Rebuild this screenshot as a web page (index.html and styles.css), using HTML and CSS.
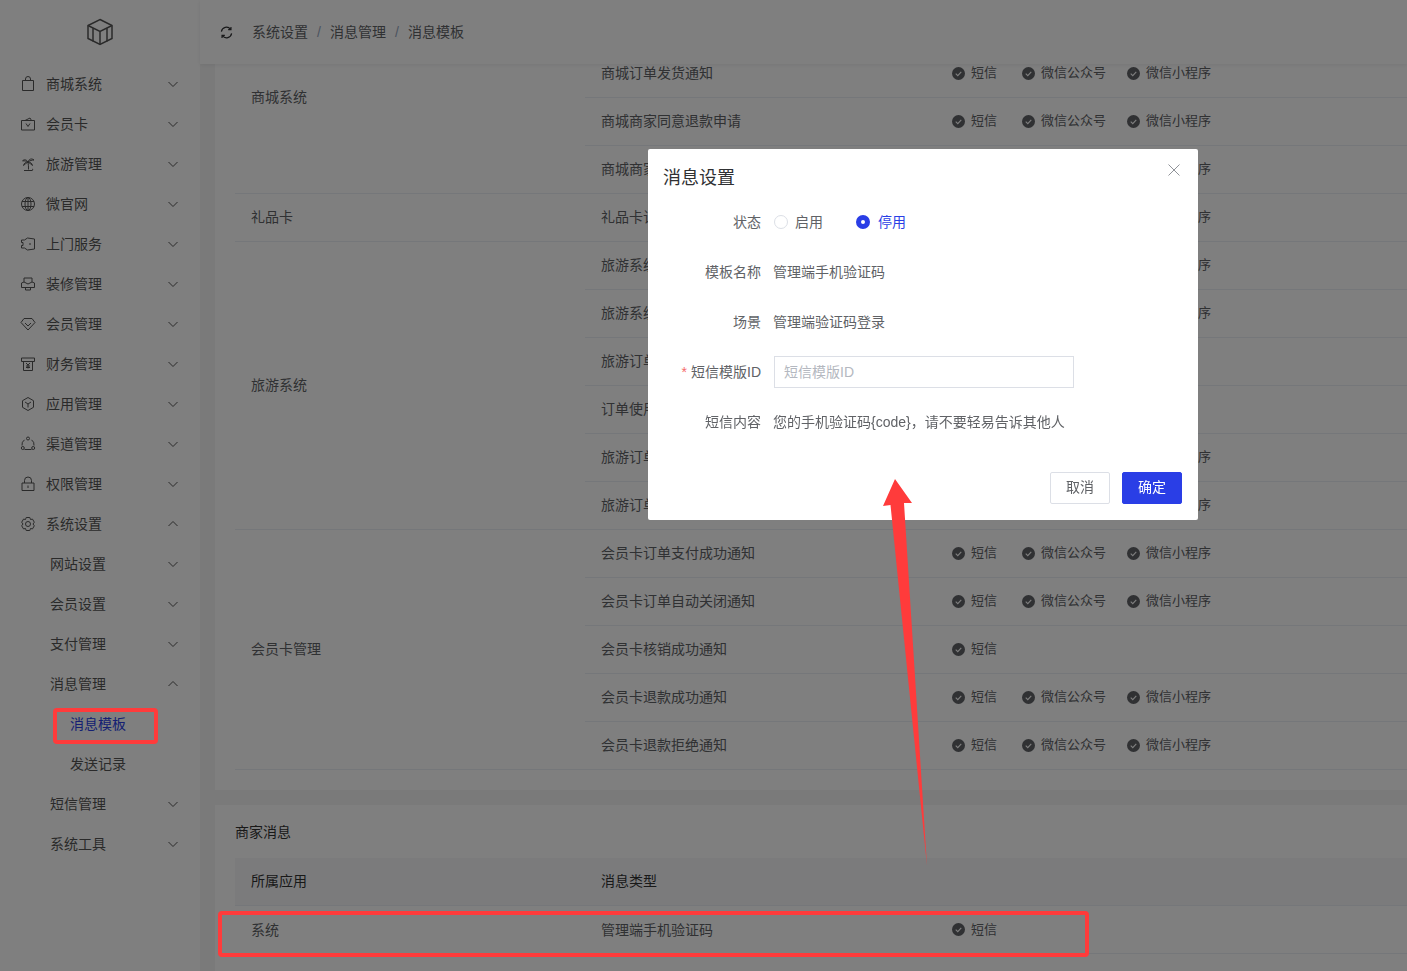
FILE: index.html
```html
<!DOCTYPE html>
<html lang="zh-CN">
<head>
    <meta charset="UTF-8">
    <meta name="viewport" content="width=device-width, initial-scale=1.0">
    <title>消息模板</title>
    <link rel="stylesheet" href="styles.css">
</head>

<body>
    <svg class="sprite" width="0" height="0">
        <symbol id="down" viewBox="0 0 12 12"><path d="M1.5 4l4.500 4.500L10.500 4" fill="none" stroke="currentColor"/></symbol>
        <symbol id="up" viewBox="0 0 12 12"><path d="M1.500 8L6 3.500 10.500 8" fill="none" stroke="currentColor"/></symbol>
        <symbol id="ok" viewBox="0 0 14 14"><circle cx="7" cy="7" r="7" fill="#606266"/><path d="M4 7.200l2.200 2.100L10 5.200" fill="none" stroke="#fff" stroke-width="1.200"/></symbol>
    </svg>

    <!-- 侧边栏 -->
    <aside class="sidebar">
        <div class="logo">
            <svg width="28" height="28" viewBox="0 0 28 28" fill="none" stroke="currentColor" stroke-width="1.500">
                <path d="M14 1.500L26 7.500V20.500L14 26.500 2 20.500V7.500z"/>
                <path d="M2 7.500L14 13.500 26 7.500M14 13.500V26.500M7 10v13.500M21 10v13.500"/>
            </svg>
        </div>
        <nav>
            <div class="menu-item">
                <svg class="menu-icon" viewBox="0 0 16 16"><path d="M2.500 4.500h11v10h-11zM5.500 4.500V3a2.500 2.500 0 0 1 5 0v1.500"/></svg>
                <span>商城系统</span><svg class="arrow"><use href="#down"/></svg>
            </div>
            <div class="menu-item">
                <svg class="menu-icon" viewBox="0 0 16 16"><path d="M1.500 4.500h13v9.500h-13zM5 4.500L10 2l1.500 2.500M6 7.500L8 10.500 10 7.500"/></svg>
                <span>会员卡</span><svg class="arrow"><use href="#down"/></svg>
            </div>
            <div class="menu-item">
                <svg class="menu-icon" viewBox="0 0 16 16"><path d="M8 6c.5 2.500.5 5 .5 7.500M8 6C6.500 3.500 4 3 2.500 5 4.500 4.500 6 5 8 6zM8 6c1-3 3.500-4 6-2-2 0-4 .5-6 2zM8 6C6 6 4 7 3.500 9.500 5 8 6.500 7 8 6zM8 6c2 0 4 1 4.500 3.500C11 8 9.500 7 8 6zM4 14.500h8c1 0 1-1.500 0-1.500"/></svg>
                <span>旅游管理</span><svg class="arrow"><use href="#down"/></svg>
            </div>
            <div class="menu-item">
                <svg class="menu-icon" viewBox="0 0 16 16"><circle cx="8" cy="8" r="6.500"/><ellipse cx="8" cy="8" rx="3" ry="6.500"/><path d="M2 5.500h12M2 10.500h12M8 1.500v13"/></svg>
                <span>微官网</span><svg class="arrow"><use href="#down"/></svg>
            </div>
            <div class="menu-item">
                <svg class="menu-icon" viewBox="0 0 16 16"><path d="M1.500 4h3l3-2 7 1v10l-7 1-3-2h-3V9.500H3V6.500H1.500zM10 7v2"/></svg>
                <span>上门服务</span><svg class="arrow"><use href="#down"/></svg>
            </div>
            <div class="menu-item">
                <svg class="menu-icon" viewBox="0 0 16 16"><path d="M4 2h8v4l2.500 1v4.500h-13V7L4 6zM4 6l4 2 4-2M5.500 11.500v2.500h5v-2.500"/></svg>
                <span>装修管理</span><svg class="arrow"><use href="#down"/></svg>
            </div>
            <div class="menu-item">
                <svg class="menu-icon" viewBox="0 0 16 16"><path d="M4 2.500h8L15 6.500 8 14 1 6.500zM5 7l3 3 3-3"/></svg>
                <span>会员管理</span><svg class="arrow"><use href="#down"/></svg>
            </div>
            <div class="menu-item">
                <svg class="menu-icon" viewBox="0 0 16 16"><path d="M1.500 2h13v3.500h-13zM3.500 5.500V14.500h9V5.500M6 7l2 2 2-2M8 9v3.500M6 10h4M6 11.500h4"/></svg>
                <span>财务管理</span><svg class="arrow"><use href="#down"/></svg>
            </div>
            <div class="menu-item">
                <svg class="menu-icon" viewBox="0 0 16 16"><path d="M8 1.500l5.500 3.200v6.600L8 14.500l-5.500-3.200V4.700zM5 6l3 2 3-2M8 8v3.500"/></svg>
                <span>应用管理</span><svg class="arrow"><use href="#down"/></svg>
            </div>
            <div class="menu-item">
                <svg class="menu-icon" viewBox="0 0 16 16"><path d="M4.500 3.800A6 6 0 0 0 2 9.500M11.500 3.800A6 6 0 0 1 14 9.500M4.500 13.500h7"/><circle cx="8" cy="2.500" r="1.500"/><circle cx="2.800" cy="12" r="1.500"/><circle cx="13.200" cy="12" r="1.500"/></svg>
                <span>渠道管理</span><svg class="arrow"><use href="#down"/></svg>
            </div>
            <div class="menu-item">
                <svg class="menu-icon" viewBox="0 0 16 16"><path d="M2 7h12v7.500H2zM4.500 7V4.500a3.500 3.500 0 0 1 7 0V7M8 9.500v2.500"/></svg>
                <span>权限管理</span><svg class="arrow"><use href="#down"/></svg>
            </div>
            <div class="menu-item">
                <svg class="menu-icon" viewBox="0 0 16 16"><path d="M6.200 1.500h3.600l.7 2 2-.4 1.800 3.100L13 8l1.300 1.800-1.800 3.100-2-.4-.7 2H6.200l-.7-2-2 .4-1.800-3.100L3 8 1.700 6.200l1.800-3.100 2 .4z"/><circle cx="8" cy="8" r="2.500"/></svg>
                <span>系统设置</span><svg class="arrow"><use href="#up"/></svg>
            </div>
            <div class="menu-item sub"><span>网站设置</span><svg class="arrow"><use href="#down"/></svg></div>
            <div class="menu-item sub"><span>会员设置</span><svg class="arrow"><use href="#down"/></svg></div>
            <div class="menu-item sub"><span>支付管理</span><svg class="arrow"><use href="#down"/></svg></div>
            <div class="menu-item sub"><span>消息管理</span><svg class="arrow"><use href="#up"/></svg></div>
            <div class="menu-item leaf active"><span>消息模板</span></div>
            <div class="menu-item leaf"><span>发送记录</span></div>
            <div class="menu-item sub"><span>短信管理</span><svg class="arrow"><use href="#down"/></svg></div>
            <div class="menu-item sub"><span>系统工具</span><svg class="arrow"><use href="#down"/></svg></div>
        </nav>
    </aside>

    <div class="main">
        <header class="topbar">
            <svg class="refresh" viewBox="0 0 14 14" fill="none" stroke="currentColor" stroke-width="1.300">
                <path d="M1.500 6a5.500 5.500 0 0 1 9.800-2.500M12.500 8a5.500 5.500 0 0 1-9.800 2.500M11.800 1v3h-3M2.200 13v-3h3"/>
            </svg>
            <span>系统设置</span><i>/</i><span>消息管理</span><i>/</i><span>消息模板</span>
        </header>

        <div class="content">
            <section class="card first">
                <table class="msg-table">
                    <tr>
                        <td class="col-app" rowspan="4">商城系统</td>
                        <td class="col-name">商城订单支付成功通知</td>
                        <td><div class="types"><span class="type sms"><svg><use href="#ok"/></svg>短信</span><span class="type wx"><svg><use href="#ok"/></svg>微信公众号</span><span class="type"><svg><use href="#ok"/></svg>微信小程序</span></div></td>
                    </tr>
                    <tr>
                        <td class="col-name">商城订单发货通知</td>
                        <td><div class="types"><span class="type sms"><svg><use href="#ok"/></svg>短信</span><span class="type wx"><svg><use href="#ok"/></svg>微信公众号</span><span class="type"><svg><use href="#ok"/></svg>微信小程序</span></div></td>
                    </tr>
                    <tr>
                        <td class="col-name">商城商家同意退款申请</td>
                        <td><div class="types"><span class="type sms"><svg><use href="#ok"/></svg>短信</span><span class="type wx"><svg><use href="#ok"/></svg>微信公众号</span><span class="type"><svg><use href="#ok"/></svg>微信小程序</span></div></td>
                    </tr>
                    <tr>
                        <td class="col-name">商城商家拒绝退款申请</td>
                        <td><div class="types"><span class="type sms"><svg><use href="#ok"/></svg>短信</span><span class="type wx"><svg><use href="#ok"/></svg>微信公众号</span><span class="type"><svg><use href="#ok"/></svg>微信小程序</span></div></td>
                    </tr>
                    <tr>
                        <td class="col-app">礼品卡</td>
                        <td class="col-name">礼品卡订单支付成功通知</td>
                        <td><div class="types"><span class="type sms"><svg><use href="#ok"/></svg>短信</span><span class="type wx"><svg><use href="#ok"/></svg>微信公众号</span><span class="type"><svg><use href="#ok"/></svg>微信小程序</span></div></td>
                    </tr>
                    <tr>
                        <td class="col-app" rowspan="6">旅游系统</td>
                        <td class="col-name">旅游系统订单支付成功通知</td>
                        <td><div class="types"><span class="type sms"><svg><use href="#ok"/></svg>短信</span><span class="type wx"><svg><use href="#ok"/></svg>微信公众号</span><span class="type"><svg><use href="#ok"/></svg>微信小程序</span></div></td>
                    </tr>
                    <tr>
                        <td class="col-name">旅游系统订单确认通知</td>
                        <td><div class="types"><span class="type sms"><svg><use href="#ok"/></svg>短信</span><span class="type wx"><svg><use href="#ok"/></svg>微信公众号</span><span class="type"><svg><use href="#ok"/></svg>微信小程序</span></div></td>
                    </tr>
                    <tr>
                        <td class="col-name">旅游订单核销通知</td>
                        <td><div class="types"><span class="type sms"><svg><use href="#ok"/></svg>短信</span></div></td>
                    </tr>
                    <tr>
                        <td class="col-name">订单使用提醒</td>
                        <td><div class="types"><span class="type sms"><svg><use href="#ok"/></svg>短信</span></div></td>
                    </tr>
                    <tr>
                        <td class="col-name">旅游订单退款成功通知</td>
                        <td><div class="types"><span class="type sms"><svg><use href="#ok"/></svg>短信</span><span class="type wx"><svg><use href="#ok"/></svg>微信公众号</span><span class="type"><svg><use href="#ok"/></svg>微信小程序</span></div></td>
                    </tr>
                    <tr>
                        <td class="col-name">旅游订单退款拒绝通知</td>
                        <td><div class="types"><span class="type sms"><svg><use href="#ok"/></svg>短信</span><span class="type wx"><svg><use href="#ok"/></svg>微信公众号</span><span class="type"><svg><use href="#ok"/></svg>微信小程序</span></div></td>
                    </tr>
                    <tr>
                        <td class="col-app" rowspan="5">会员卡管理</td>
                        <td class="col-name">会员卡订单支付成功通知</td>
                        <td><div class="types"><span class="type sms"><svg><use href="#ok"/></svg>短信</span><span class="type wx"><svg><use href="#ok"/></svg>微信公众号</span><span class="type"><svg><use href="#ok"/></svg>微信小程序</span></div></td>
                    </tr>
                    <tr>
                        <td class="col-name">会员卡订单自动关闭通知</td>
                        <td><div class="types"><span class="type sms"><svg><use href="#ok"/></svg>短信</span><span class="type wx"><svg><use href="#ok"/></svg>微信公众号</span><span class="type"><svg><use href="#ok"/></svg>微信小程序</span></div></td>
                    </tr>
                    <tr>
                        <td class="col-name">会员卡核销成功通知</td>
                        <td><div class="types"><span class="type sms"><svg><use href="#ok"/></svg>短信</span></div></td>
                    </tr>
                    <tr>
                        <td class="col-name">会员卡退款成功通知</td>
                        <td><div class="types"><span class="type sms"><svg><use href="#ok"/></svg>短信</span><span class="type wx"><svg><use href="#ok"/></svg>微信公众号</span><span class="type"><svg><use href="#ok"/></svg>微信小程序</span></div></td>
                    </tr>
                    <tr>
                        <td class="col-name">会员卡退款拒绝通知</td>
                        <td><div class="types"><span class="type sms"><svg><use href="#ok"/></svg>短信</span><span class="type wx"><svg><use href="#ok"/></svg>微信公众号</span><span class="type"><svg><use href="#ok"/></svg>微信小程序</span></div></td>
                    </tr>
                </table>
            </section>

            <section class="card">
                <h3 class="card-title">商家消息</h3>
                <table class="msg-table">
                    <tr class="head">
                        <th class="col-app">所属应用</th>
                        <th class="col-name">消息类型</th>
                        <th></th>
                    </tr>
                    <tr>
                        <td class="col-app">系统</td>
                        <td class="col-name">管理端手机验证码</td>
                        <td><div class="types"><span class="type sms"><svg><use href="#ok"/></svg>短信</span></div></td>
                    </tr>
                </table>
            </section>
        </div>
    </div>

    <!-- 弹窗 -->
    <div class="mask"></div>
    <div class="dialog">
        <h2 class="dialog-title">消息设置</h2>
        <svg class="dialog-close" viewBox="0 0 12 12"><path d="M.5.5l11 11M11.500.5l-11 11" stroke="currentColor" fill="none"/></svg>
        <div class="form">
            <div class="form-row">
                <label>状态</label>
                <div class="radios">
                    <span class="radio"><i class="dot"></i>启用</span>
                    <span class="radio checked"><i class="dot"></i>停用</span>
                </div>
            </div>
            <div class="form-row"><label>模板名称</label><div>管理端手机验证码</div></div>
            <div class="form-row"><label>场景</label><div>管理端验证码登录</div></div>
            <div class="form-row">
                <label><em>*</em>短信模版ID</label>
                <input type="text" placeholder="短信模版ID">
            </div>
            <div class="form-row"><label>短信内容</label><div>您的手机验证码{code}，请不要轻易告诉其他人</div></div>
        </div>
        <div class="dialog-footer">
            <button class="btn">取消</button>
            <button class="btn primary">确定</button>
        </div>
    </div>

    <!-- 红色标注 -->
    <svg class="marks" width="1407" height="971" viewBox="0 0 1407 971">
        <rect x="55" y="710" width="101" height="32" rx="2"/>
        <rect x="220" y="913" width="867" height="42" rx="2"/>
        <polygon points="895,479 912,503 904,503 927,866 890.500,505 883,506"/>
    </svg>
</body>
</html>
```

FILE: styles.css
```css
* {
    box-sizing: border-box;
}

html, body {
    height: 100%;
}

body {
    display: flex;
    margin: 0;
    overflow: hidden;
    font-family: "Liberation Sans", "Noto Sans CJK SC", sans-serif;
    font-size: 14px;
    line-height: 20px;
    color: #606266;
    background-color: #f5f5f5;
}

.sprite {
    position: absolute;
}

/* 侧边栏 */
.sidebar {
    flex: 0 0 200px;
    background-color: #fff;
    color: #555;
}

.logo {
    display: flex;
    justify-content: center;
    align-items: center;
    height: 64px;
}

.menu-item {
    display: flex;
    align-items: center;
    height: 40px;
    padding-left: 20px;
}

.menu-icon {
    flex: none;
    width: 16px;
    height: 16px;
    margin-right: 10px;
    fill: none;
    stroke: currentColor;
}

.arrow {
    width: 12px;
    height: 12px;
    margin-left: auto;
    margin-right: 21px;
}

.menu-item.sub {
    padding-left: 50px;
}

.menu-item.leaf {
    padding-left: 70px;
}

.menu-item.active {
    color: #2a3ee6;
}

/* 顶部 */
.main {
    display: flex;
    flex: 1;
    flex-direction: column;
    min-width: 0;
}

.topbar {
    position: relative;
    z-index: 1;
    display: flex;
    flex: 0 0 64px;
    align-items: center;
    padding-left: 20px;
    background-color: #fff;
    box-shadow: 0 1px 4px rgba(0, 21, 41, 0.08);
}

.topbar i {
    width: 22px;
    font-style: normal;
    text-align: center;
    color: #97a8be;
}

.refresh {
    width: 13px;
    height: 13px;
    margin-right: 19px;
    color: #303133;
}

/* 内容 */
.content {
    flex: 1;
    padding-left: 15px;
    overflow: hidden;
}

.card {
    margin-right: -20px;
    margin-bottom: 15px;
    padding: 20px;
    background-color: #fff;
}

.card.first {
    margin-top: -63px;
    padding-top: 0;
}

.card-title {
    margin: 0 0 19px;
    font-size: 14px;
    font-weight: normal;
    line-height: 14px;
    color: #333;
}

.msg-table {
    width: 100%;
    border-collapse: collapse;
    table-layout: fixed;
}

.msg-table td,
.msg-table th {
    height: 48px;
    padding: 0 16px;
    border-bottom: 1px solid #ebeef5;
    font-weight: normal;
    text-align: left;
}

.col-app {
    width: 350px;
}

.col-name {
    width: 351px;
}

.head th {
    background-color: #f6f7f9;
    color: #333;
}

.types {
    display: flex;
    font-size: 13px;
}

.type {
    display: flex;
    align-items: center;
    white-space: nowrap;
}

.type svg {
    width: 13px;
    height: 13px;
    margin-right: 6px;
}

.type.sms {
    width: 70px;
}

.type.wx {
    width: 105px;
}

/* 遮罩和弹窗 */
.mask {
    position: fixed;
    top: 0;
    left: 0;
    z-index: 10;
    width: 100%;
    height: 100%;
    background: rgba(0, 0, 0, 0.5);
}

.dialog {
    position: fixed;
    top: 149px;
    left: 648px;
    z-index: 11;
    width: 550px;
    height: 371px;
    border-radius: 2px;
    background-color: #fff;
}

.dialog-title {
    margin: 0;
    padding: 15px 15px 5px;
    font-size: 18px;
    font-weight: normal;
    line-height: 28px;
    color: #303133;
}

.dialog-close {
    position: absolute;
    top: 15px;
    right: 18px;
    width: 12px;
    height: 12px;
    color: #909399;
}

.form-row {
    display: grid;
    grid-template-columns: 113px 1fr;
    column-gap: 12px;
    align-items: center;
    height: 50px;
}

.form-row label {
    text-align: right;
}

.form-row em {
    margin-right: 4px;
    font-style: normal;
    color: #f56c6c;
}

.form-row input {
    width: 300px;
    height: 32px;
    margin-left: 1px;
    padding: 0 9px;
    border: 1px solid #dcdfe6;
    font-family: inherit;
    font-size: 14px;
    outline: none;
}

.form-row input::placeholder {
    color: #b4b8c0;
}

.radios {
    display: flex;
    margin-left: 1px;
}

.radio {
    display: flex;
    align-items: center;
    width: 82px;
}

.radio .dot {
    width: 14px;
    height: 14px;
    margin-right: 7px;
    border: 1px solid #dcdfe6;
    border-radius: 50%;
}

.radio.checked {
    color: #2a3ee6;
}

.radio.checked .dot {
    border: 5px solid #2a3ee6;
    margin-right: 8px;
}

.dialog-footer {
    display: flex;
    justify-content: flex-end;
    gap: 12px;
    margin-top: 25px;
    padding-right: 16px;
}

.btn {
    width: 60px;
    height: 32px;
    padding: 0 0 2px;
    border: 1px solid #dcdfe6;
    border-radius: 2px;
    background-color: #fff;
    color: #606266;
    font-family: inherit;
    font-size: 14px;
    line-height: 20px;
    cursor: pointer;
}

.btn.primary {
    border-color: #2a3ee6;
    background-color: #2a3ee6;
    color: #fff;
}

.marks {
    position: fixed;
    top: 0;
    left: 0;
    z-index: 12;
}

.marks rect {
    fill: none;
    stroke: #ff3b3b;
    stroke-width: 4;
}

.marks polygon {
    fill: #ff3b3b;
}
```
